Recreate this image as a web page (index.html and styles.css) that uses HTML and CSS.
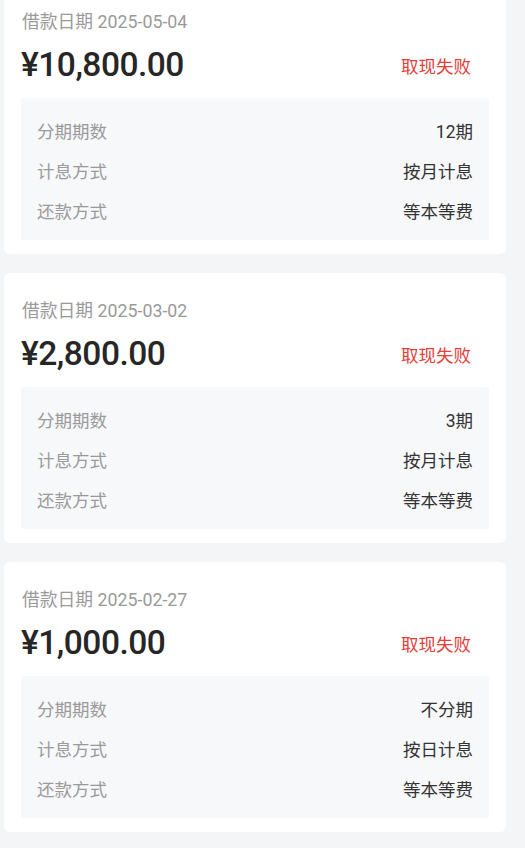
FILE: index.html
```html
<!DOCTYPE html>
<html lang="zh-CN">
<head>
<meta charset="utf-8">
<link rel="stylesheet" href="styles.css">
</head>
<body>
<div class="list">
  <div class="card">
    <div class="date">借款日期 2025-05-04</div>
    <div class="head">
      <div class="amount">¥10,800.00</div>
      <div class="status">取现失败</div>
    </div>
    <div class="info">
      <div class="row"><span class="label">分期期数</span><span class="value">12期</span></div>
      <div class="row"><span class="label">计息方式</span><span class="value">按月计息</span></div>
      <div class="row"><span class="label">还款方式</span><span class="value">等本等费</span></div>
    </div>
  </div>
  <div class="card">
    <div class="date">借款日期 2025-03-02</div>
    <div class="head">
      <div class="amount">¥2,800.00</div>
      <div class="status">取现失败</div>
    </div>
    <div class="info">
      <div class="row"><span class="label">分期期数</span><span class="value">3期</span></div>
      <div class="row"><span class="label">计息方式</span><span class="value">按月计息</span></div>
      <div class="row"><span class="label">还款方式</span><span class="value">等本等费</span></div>
    </div>
  </div>
  <div class="card">
    <div class="date">借款日期 2025-02-27</div>
    <div class="head">
      <div class="amount">¥1,000.00</div>
      <div class="status">取现失败</div>
    </div>
    <div class="info">
      <div class="row"><span class="label">分期期数</span><span class="value">不分期</span></div>
      <div class="row"><span class="label">计息方式</span><span class="value">按日计息</span></div>
      <div class="row"><span class="label">还款方式</span><span class="value">等本等费</span></div>
    </div>
  </div>
</div>
</body>
</html>
```

FILE: styles.css
```css
html, body {
  margin: 0;
  padding: 0;
  background: #f4f5f7;
  font-family: Roboto, "Noto Sans CJK SC", sans-serif;
  height: 848px;
  overflow: hidden;
}

.list {
  display: flex;
  flex-direction: column;
  gap: 19px;
  width: 502px;
  margin: -16px 0 0 4px;
}

.card {
  background: #ffffff;
  border-radius: 6px;
  padding: 24px 17px 14px;
  height: 270px;
  box-sizing: border-box;
  display: flex;
  flex-direction: column;
}

.date {
  font-size: 17.8px;
  line-height: 28px;
  color: #9a9a9a;
  padding-left: 1px;
}

.head {
  display: flex;
  justify-content: space-between;
  align-items: center;
  height: 44px;
  margin-top: 6px;
}

.amount {
  font-size: 33.5px;
  font-weight: 500;
  color: #262626;
  letter-spacing: -0.5px;
}

.status {
  font-size: 17.5px;
  color: #e5403a;
  padding-right: 18px;
  padding-top: 3px;
}

.info {
  margin-top: 12px;
  background: #f7f8fa;
  border-radius: 2px;
  height: 142px;
  box-sizing: border-box;
  padding: 12px 16px 10px;
  display: flex;
  flex-direction: column;
}

.row {
  display: flex;
  justify-content: space-between;
  align-items: center;
  height: 40px;
  font-size: 17.5px;
}

.label {
  color: #9a9a9a;
}

.value {
  color: #333333;
}
```
